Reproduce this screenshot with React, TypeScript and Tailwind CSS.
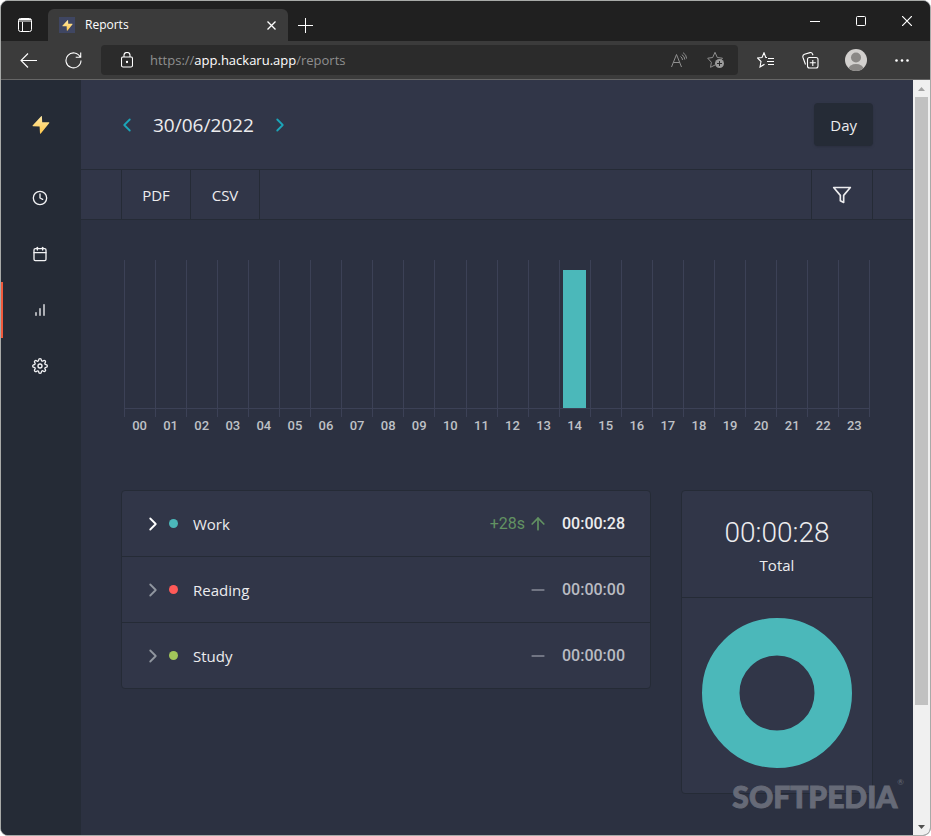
import { FiCalendar, FiChevronLeft, FiChevronRight, FiClock, FiFilter, FiSettings, FiBarChart, FiArrowUp, FiMinus } from "react-icons/fi";

const hours = Array.from({ length: 24 }, (_, i) => String(i).padStart(2, "0"));

const projects = [
  { name: "Work", dot: "bg-[#4bb8ba]", time: "00:00:28", diff: "+28s", active: true },
  { name: "Reading", dot: "bg-[#ff5a58]", time: "00:00:00", diff: "", active: false },
  { name: "Study", dot: "bg-[#a2c65a]", time: "00:00:00", diff: "", active: false },
];

const Bolt = ({ size }: { size: number }) => (
  <svg width={size} height={size} viewBox="0 0 18 18">
    <defs>
      <linearGradient id="bolt" x1="0" y1="0" x2="0" y2="1">
        <stop offset="0" stopColor="#ffe9a8" />
        <stop offset="1" stopColor="#ffc84a" />
      </linearGradient>
    </defs>
    <path d="M9.4 0L0.6 9.4Q0.3 10.2 1 10.2L7.6 10.4 8 17.4Q8.3 18 8.8 17.5L17.3 7Q17.5 6.3 16.9 6.3L10.2 6.2 9.9 0.3Z" fill="url(#bolt)" />
  </svg>
);

const TabStrip = () => (
  <div className="flex h-10 items-stretch bg-[#202020]">
    <button aria-label="Tab actions" className="flex w-[47px] items-center justify-center pt-2">
      <svg width="14" height="14" viewBox="0 0 14 14" fill="none" stroke="#fff">
        <rect x="0.5" y="0.5" width="13" height="13" rx="2" />
        <path d="M1 1.5h12M1 3h12M4.5 4v9.5" />
      </svg>
    </button>
    <div className="mt-2 flex w-60 items-center rounded-t-md bg-[#3b3b3b] px-[11px]">
      <span className="flex size-4 items-center justify-center bg-[#3f4662]">
        <Bolt size={11} />
      </span>
      <span className="ml-[10px] flex-1 text-[12px] text-white">Reports</span>
      <button aria-label="Close tab" className="flex size-3 items-center justify-center">
        <svg width="9" height="9" viewBox="0 0 9 9" stroke="#fff" strokeWidth="1.3">
          <path d="M0.5 0.5l8 8M8.5 0.5l-8 8" />
        </svg>
      </button>
    </div>
    <button aria-label="New tab" className="flex w-[35px] items-center justify-center pt-2">
      <svg width="15" height="15" viewBox="0 0 15 15" stroke="#fff">
        <path d="M7.5 0v15M0 7.5h15" />
      </svg>
    </button>
    <div className="ml-auto flex items-center">
      <button aria-label="Minimize" className="flex h-full w-[46px] items-center justify-center">
        <svg width="10" height="10" viewBox="0 0 10 10" stroke="#fff"><path d="M0 5.5h10" /></svg>
      </button>
      <button aria-label="Maximize" className="flex h-full w-[46px] items-center justify-center">
        <svg width="10" height="10" viewBox="0 0 10 10" fill="none" stroke="#fff"><rect x="0.5" y="0.5" width="9" height="9" rx="1" /></svg>
      </button>
      <button aria-label="Close" className="flex h-full w-[46px] items-center justify-center">
        <svg width="10" height="10" viewBox="0 0 10 10" stroke="#fff" strokeWidth="1.2"><path d="M0 0l10 10M10 0L0 10" /></svg>
      </button>
    </div>
  </div>
);

const AddressBar = () => (
  <div className="flex h-[39px] items-center border-b border-[#666] bg-[#3b3b3b]">
    <button aria-label="Back" className="ml-[19px] mr-7">
      <svg width="17" height="15" viewBox="0 0 17 15" fill="none" stroke="#fff" strokeWidth="1.1">
        <path d="M8 0.5L1 7.5l7 7M1 7.5h16" />
      </svg>
    </button>
    <button aria-label="Refresh" className="mr-[19px]">
      <svg width="17" height="17" viewBox="0 0 17 17" fill="none" stroke="#fff" strokeWidth="1.1">
        <path d="M15.2 5A7.5 7.5 0 1 0 16 8.5M15.7 0.5v4.8h-5" />
      </svg>
    </button>
    <div className="flex h-[30px] flex-1 items-center rounded bg-[#2b2b2b] px-5">
      <svg width="12" height="16" viewBox="0 0 12 16" fill="none" stroke="#fff" strokeWidth="1.1">
        <rect x="0.5" y="5" width="11" height="10" rx="1.5" />
        <path d="M3 5V3.3a3 2.8 0 0 1 6 0V5" />
        <circle cx="6" cy="10" r="0.6" fill="#fff" />
      </svg>
      <p className="ml-[17px] flex-1 pt-0.5 text-[13px] text-[#8f8f8f]">
        https://<span className="text-white">app.hackaru.app</span>/reports
      </p>
      <button aria-label="Read aloud" className="mr-5">
        <svg width="16" height="16" viewBox="0 0 16 16" fill="none" stroke="#8f8f8f">
          <path d="M0.5 15L5.5 2.5l5 12.5M2.3 10.5h6.4M9.5 4.5q2 1.2 2 3.5M10.8 2.6q3 1.8 3 5M12 0.6q3.6 2.2 3.6 6" />
        </svg>
      </button>
      <button aria-label="Add to favorites" className="-mr-[7px]">
        <svg width="18" height="18" viewBox="0 0 18 18" fill="none" stroke="#8f8f8f">
          <path d="M8 14l-4.5 2.3.9-5L0.7 7.2l5-.7L8 1.3l2.3 5.2 5.2.7-2 2" />
          <circle cx="12.5" cy="12.5" r="4.5" fill="#9a9a9a" stroke="none" />
          <path d="M12.5 10v5M10 12.5h5" stroke="#2b2b2b" />
        </svg>
      </button>
    </div>
    <div className="flex items-center pr-[21px] pl-[19px]">
      <button aria-label="Favorites" className="mr-7">
        <svg width="17" height="16" viewBox="0 0 17 16" fill="none" stroke="#fff" strokeWidth="1.1">
          <path d="M10 5.5H8.8L7 0.8 5 5.5l-4.5.5 3.5 3.5L3 15l4.5-2.8M11 6.5h6M10 9.5h7M11 12.5h6" />
        </svg>
      </button>
      <button aria-label="Collections" className="mr-[26px]">
        <svg width="17" height="17" viewBox="0 0 17 17" fill="none" stroke="#fff" strokeWidth="1.1">
          <rect x="5.5" y="5.5" width="10.5" height="10.5" rx="2" />
          <path d="M10.8 8v6M7.8 10.8h6M3.5 12.5L1 5.5Q0.3 3 2.5 2.2L8 0.6Q10 0.3 10.5 2l.5 1.2" />
        </svg>
      </button>
      <button aria-label="Profile" className="mr-7">
        <svg width="22" height="22" viewBox="0 0 22 22">
          <clipPath id="avatar"><circle cx="11" cy="11" r="11" /></clipPath>
          <g clipPath="url(#avatar)">
            <rect width="22" height="22" fill="#d2d0ce" />
            <circle cx="11" cy="8.5" r="5" fill="#8a8886" />
            <ellipse cx="11" cy="20" rx="7.5" ry="5" fill="#8a8886" />
          </g>
        </svg>
      </button>
      <button aria-label="Settings and more">
        <svg width="14" height="3" viewBox="0 0 14 3" fill="#fff">
          <circle cx="1.5" cy="1.5" r="1.3" /><circle cx="7" cy="1.5" r="1.3" /><circle cx="12.5" cy="1.5" r="1.3" />
        </svg>
      </button>
    </div>
  </div>
);

const Sidebar = () => (
  <nav className="w-20 shrink-0 bg-[#252b36] text-[#f2f2f4]">
    <a href="#home" aria-label="Home" className="flex h-[90px] items-center justify-center">
      <Bolt size={18} />
    </a>
    <a href="#timer" aria-label="Timer" className="flex h-14 items-center justify-center pr-0.5"><FiClock size={16} /></a>
    <a href="#calendar" aria-label="Calendar" className="flex h-14 items-center justify-center pr-0.5"><FiCalendar size={16} /></a>
    <a href="#reports" aria-label="Reports" className="flex h-14 items-center justify-center border-l-2 border-[#f05a3c] pr-1"><FiBarChart size={16} /></a>
    <a href="#settings" aria-label="Settings" className="flex h-14 items-center justify-center pr-0.5"><FiSettings size={16} /></a>
  </nav>
);

const BarChart = () => (
  <div className="px-[3px]">
    <div className="flex h-[157px] border-r border-[#3c4156]">
      {hours.map((hour) => (
        <div key={hour} className="flex-1 border-l border-[#3c4156]">
          <div className="flex h-[149px] flex-col justify-end border-b border-[#3c4156]">
            {hour === "14" && <div className="ml-[3px] mr-1 h-[138px] bg-[#4bb8ba]" />}
          </div>
        </div>
      ))}
    </div>
    <div className="flex font-[Roboto,sans-serif] text-[13px] leading-[18px] font-medium text-[#bfc1c6]">
      {hours.map((hour) => (
        <span key={hour} className="flex-1 text-center">{hour}</span>
      ))}
    </div>
  </div>
);

const ProjectList = () => (
  <ul className="flex-1 divide-y divide-[#252b36] self-start rounded-sm border border-[#252b36] bg-[#313648]">
    {projects.map((p) => (
      <li key={p.name} className="flex h-[66px] items-center pr-[25px] pl-5 last:h-[65px]">
        <button aria-label={`Expand ${p.name}`} className={p.active ? "text-white" : "text-[#90969f]"}>
          <FiChevronRight size={22} />
        </button>
        <span className={`ml-[5px] size-[9px] rounded-full ${p.dot}`} />
        <span className="ml-[15px] flex-1 pt-0.5 text-[15px] text-[#ececee]">{p.name}</span>
        {p.diff && <span className="mr-[3px] font-[Roboto,sans-serif] text-[16px] text-[#629262]">{p.diff}</span>}
        {p.active ? <FiArrowUp size={20} className="text-[#629262]" /> : <FiMinus size={20} className="text-[#868a97]" />}
        <span className={`ml-[14px] font-[Roboto,sans-serif] text-[16px] font-medium ${p.active ? "text-[#ececee]" : "text-[#b9bbc2]"}`}>
          {p.time}
        </span>
      </li>
    ))}
  </ul>
);

const Summary = () => (
  <section className="w-48 rounded-sm border border-[#252b36] bg-[#313648]">
    <div className="flex h-[107px] flex-col items-center justify-center border-b border-[#252b36] pt-1.5 text-[#ececee]">
      <p className="font-[Roboto,sans-serif] text-[28px] leading-9 font-light">00:00:28</p>
      <h2 className="text-[15px] leading-7">Total</h2>
    </div>
    <div className="flex justify-center pt-5 pb-[25px]">
      <svg width="150" height="150" viewBox="0 0 150 150" fill="none">
        <circle cx="75" cy="75" r="56.25" stroke="#4bb8ba" strokeWidth="37.5" />
      </svg>
    </div>
  </section>
);

const Scrollbar = () => (
  <div className="flex w-[17px] shrink-0 flex-col items-center bg-[#f0f0f0]">
    <svg width="17" height="17" viewBox="0 0 17 17"><path d="M5 11l3.5-4 3.5 4z" fill="#a3a3a3" /></svg>
    <div className="w-[13px] flex-[608] bg-[#c1c1c1]" />
    <div className="flex-[113]" />
    <svg width="17" height="17" viewBox="0 0 17 17"><path d="M5 7l3.5 4 3.5-4z" fill="#505050" /></svg>
  </div>
);

const App = () => {
  return (
    <div className="bg-white">
      <div className="relative flex min-h-screen flex-col overflow-hidden rounded-lg border border-[#a8aaa8] bg-[#2c3141] font-['Open_Sans',sans-serif]">
        <TabStrip />
        <AddressBar />
        <div className="flex flex-1">
          <Sidebar />
          <main className="min-w-0 flex-1">
            <header className="flex h-[90px] items-center border-b border-[#252b36] bg-[#313648] px-10 text-[#ececee]">
              <button aria-label="Previous day" className="-ml-[5px] text-[#1ba5b8]"><FiChevronLeft size={22} /></button>
              <h1 className="mx-[15px] pt-0.5 text-[19px]">30/06/2022</h1>
              <button aria-label="Next day" className="text-[#1ba5b8]"><FiChevronRight size={22} /></button>
              <button className="ml-auto h-[43px] rounded bg-[#252b36] px-4 pt-0.5 text-[15px] shadow-sm">Day</button>
            </header>
            <div className="flex h-[50px] border-b border-[#252b36] bg-[#313648] px-10 text-[15px] text-[#ececee]">
              <button className="w-[70px] border-x border-[#252b36] pt-0.5">PDF</button>
              <button className="w-[69px] border-r border-[#252b36] pt-0.5">CSV</button>
              <button aria-label="Filter" className="ml-auto flex w-[62px] items-center justify-center border-x border-[#252b36]"><FiFilter size={20} /></button>
            </div>
            <div className="p-10">
              <BarChart />
              <div className="mt-[55px] flex gap-[30px]">
                <ProjectList />
                <Summary />
              </div>
            </div>
          </main>
          <Scrollbar />
        </div>
        <p className="absolute right-[26px] bottom-[19px] flex items-start font-[Lato,sans-serif] text-[30px] leading-10 font-black text-[#666a77] [-webkit-text-stroke:1px_#666a77]">
          SOFTPEDIA<span className="text-[8px] leading-3 font-normal [-webkit-text-stroke:0]">®</span>
        </p>
      </div>
    </div>
  );
};

export default App;
